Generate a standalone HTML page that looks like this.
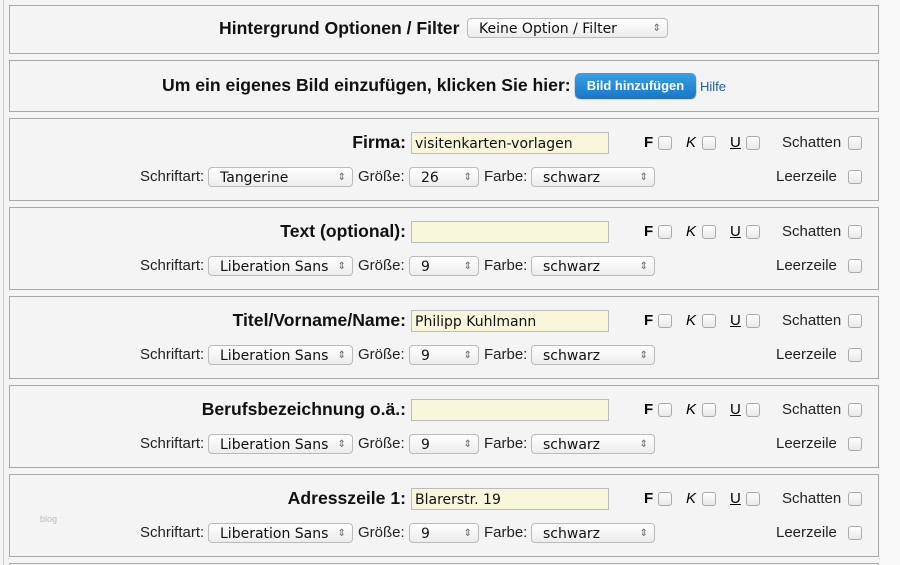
<!DOCTYPE html><html style="overflow:hidden;height:565px"><head><meta charset="utf-8"><style>
body{margin:0;width:900px;height:565px;background:#f4f4f4;font-family:"Liberation Sans",sans-serif;position:relative;overflow:hidden}
.p{position:absolute;left:9px;width:868px;border:1px solid #a9a9a9;background:#f4f4f4}
.a{position:absolute;white-space:nowrap}
.lb{font-weight:bold;font-size:17.6px;color:#111}
.t{font-size:15px;color:#222}
.sel{position:absolute;height:20px;border:1px solid #bbb;border-radius:4px;background:linear-gradient(#fff,#ececec);font-family:"DejaVu Sans",sans-serif;font-size:14px;line-height:20px;padding-left:11px;box-sizing:border-box;color:#111}
.sel:after{content:"⇕";position:absolute;right:6px;top:0;font-size:10px;color:#666}
.in{position:absolute;height:22px;width:198px;border:1px solid #bbb;background:#f8f7dc;font-family:"DejaVu Sans",sans-serif;font-size:14px;line-height:22px;padding-left:3px;box-sizing:border-box;color:#111}
.cb{position:absolute;width:12px;height:12px;border:1px solid #aaa;border-radius:3px;background:linear-gradient(#fff,#e8e8e8)}
</style></head><body>
<div style="position:absolute;left:3px;top:0;width:1px;height:565px;background:#ccc"></div>
<div style="position:absolute;left:880px;top:0;width:20px;height:565px;background:#f9f9f9"></div>
<div class="p" style="top:5px;height:47px"></div>
<div class="a lb" style="left:219px;top:18px">Hintergrund Optionen / Filter</div>
<div class="sel" style="left:467px;top:18px;width:201px">Keine Option / Filter</div>
<div class="p" style="top:60px;height:50px"></div>
<div class="a lb" style="left:162px;top:75px">Um ein eigenes Bild einzufügen, klicken Sie hier:</div>
<div class="a" style="left:575px;top:73px;width:121px;height:25px;border-radius:5px;background:linear-gradient(#3aa0e8,#1778c8);color:#fff;font-weight:bold;font-size:13px;line-height:25px;text-align:center;box-shadow:0 1px 1px #135a99">Bild hinzufügen</div>
<div class="a" style="left:700px;top:79px;font-size:13px;color:#1a5fa8">Hilfe</div>
<div id="rows"></div>
<script>
var d=[["Firma:","visitenkarten-vorlagen","Tangerine","26"],["Text (optional):","","Liberation Sans","9"],["Titel/Vorname/Name:","Philipp Kuhlmann","Liberation Sans","9"],["Berufsbezeichnung o.ä.:","","Liberation Sans","9"],["Adresszeile 1:","Blarerstr. 19","Liberation Sans","9"]];
var h="";
d.forEach(function(r,i){var y=118+i*89;
h+='<div class="p" style="top:'+y+'px;height:81px"></div>';
h+='<div class="a lb" style="right:494px;top:'+(y+14)+'px">'+r[0]+'</div>';
h+='<div class="in" style="left:411px;top:'+(y+14)+'px">'+r[1]+'</div>';
h+='<div class="a" style="left:644px;top:'+(y+16)+'px;font-weight:bold;font-size:15px">F</div><div class="cb" style="left:658px;top:'+(y+18)+'px"></div>';
h+='<div class="a" style="left:686px;top:'+(y+16)+'px;font-style:italic;font-size:15px">K</div><div class="cb" style="left:702px;top:'+(y+18)+'px"></div>';
h+='<div class="a" style="left:730px;top:'+(y+16)+'px;text-decoration:underline;font-size:15px">U</div><div class="cb" style="left:746px;top:'+(y+18)+'px"></div>';
h+='<div class="a t" style="left:782px;top:'+(y+16)+'px">Schatten</div><div class="cb" style="left:848px;top:'+(y+18)+'px"></div>';
var y2=y+49;
h+='<div class="a t" style="left:140px;top:'+(y2+1)+'px">Schriftart:</div><div class="sel" style="left:208px;top:'+y2+'px;width:145px">'+r[2]+'</div>';
h+='<div class="a t" style="left:358px;top:'+(y2+1)+'px">Größe:</div><div class="sel" style="left:409px;top:'+y2+'px;width:70px">'+r[3]+'</div>';
h+='<div class="a t" style="left:484px;top:'+(y2+1)+'px">Farbe:</div><div class="sel" style="left:531px;top:'+y2+'px;width:124px">schwarz</div>';
h+='<div class="a t" style="left:776px;top:'+(y2+1)+'px">Leerzeile</div><div class="cb" style="left:848px;top:'+(y2+3)+'px"></div>';
});
h+='<div class="a" style="left:40px;top:514px;font-size:9px;color:#bbb">blog</div>';
h+='<div class="p" style="top:563px;height:20px"></div>';
document.getElementById("rows").innerHTML=h;
</script>
</body></html>
